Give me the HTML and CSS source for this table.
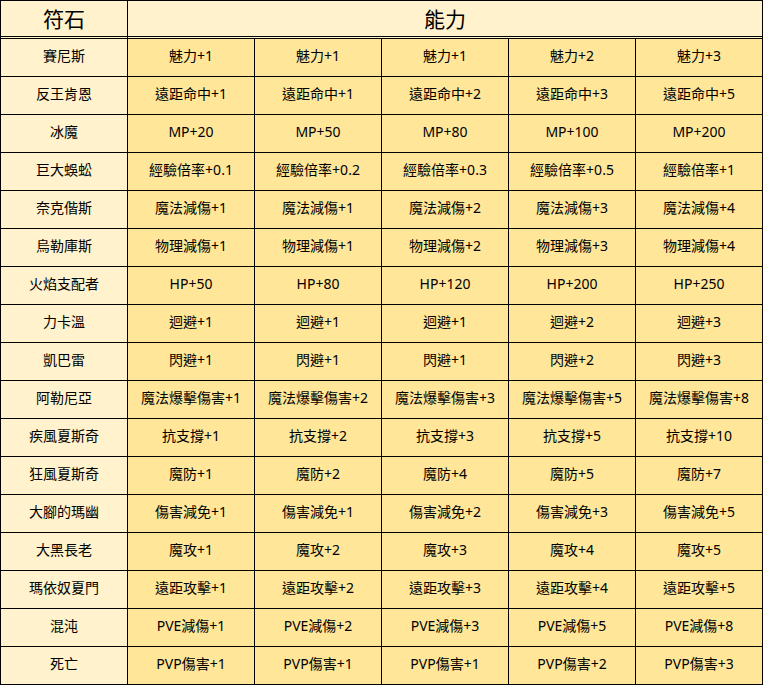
FILE: index.html
```html
<!DOCTYPE html>
<html lang="zh-Hant">
<head>
<meta charset="utf-8">
<title>符石能力</title>
<link rel="stylesheet" href="styles.css">
</head>
<body>
<div class="sheet">
  <div class="cell head">符石</div>
  <div class="cell head wide">能力</div>

  <div class="cell name">賽尼斯</div><div class="cell val">魅力+1</div><div class="cell val">魅力+1</div><div class="cell val">魅力+1</div><div class="cell val">魅力+2</div><div class="cell val">魅力+3</div>
  <div class="cell name">反王肯恩</div><div class="cell val">遠距命中+1</div><div class="cell val">遠距命中+1</div><div class="cell val">遠距命中+2</div><div class="cell val">遠距命中+3</div><div class="cell val">遠距命中+5</div>
  <div class="cell name">冰魔</div><div class="cell val">MP+20</div><div class="cell val">MP+50</div><div class="cell val">MP+80</div><div class="cell val">MP+100</div><div class="cell val">MP+200</div>
  <div class="cell name">巨大蜈蚣</div><div class="cell val">經驗倍率+0.1</div><div class="cell val">經驗倍率+0.2</div><div class="cell val">經驗倍率+0.3</div><div class="cell val">經驗倍率+0.5</div><div class="cell val">經驗倍率+1</div>
  <div class="cell name">奈克偕斯</div><div class="cell val">魔法減傷+1</div><div class="cell val">魔法減傷+1</div><div class="cell val">魔法減傷+2</div><div class="cell val">魔法減傷+3</div><div class="cell val">魔法減傷+4</div>
  <div class="cell name">烏勒庫斯</div><div class="cell val">物理減傷+1</div><div class="cell val">物理減傷+1</div><div class="cell val">物理減傷+2</div><div class="cell val">物理減傷+3</div><div class="cell val">物理減傷+4</div>
  <div class="cell name">火焰支配者</div><div class="cell val">HP+50</div><div class="cell val">HP+80</div><div class="cell val">HP+120</div><div class="cell val">HP+200</div><div class="cell val">HP+250</div>
  <div class="cell name">力卡溫</div><div class="cell val">迴避+1</div><div class="cell val">迴避+1</div><div class="cell val">迴避+1</div><div class="cell val">迴避+2</div><div class="cell val">迴避+3</div>
  <div class="cell name">凱巴雷</div><div class="cell val">閃避+1</div><div class="cell val">閃避+1</div><div class="cell val">閃避+1</div><div class="cell val">閃避+2</div><div class="cell val">閃避+3</div>
  <div class="cell name">阿勒尼亞</div><div class="cell val">魔法爆擊傷害+1</div><div class="cell val">魔法爆擊傷害+2</div><div class="cell val">魔法爆擊傷害+3</div><div class="cell val">魔法爆擊傷害+5</div><div class="cell val">魔法爆擊傷害+8</div>
  <div class="cell name">疾風夏斯奇</div><div class="cell val">抗支撐+1</div><div class="cell val">抗支撐+2</div><div class="cell val">抗支撐+3</div><div class="cell val">抗支撐+5</div><div class="cell val">抗支撐+10</div>
  <div class="cell name">狂風夏斯奇</div><div class="cell val">魔防+1</div><div class="cell val">魔防+2</div><div class="cell val">魔防+4</div><div class="cell val">魔防+5</div><div class="cell val">魔防+7</div>
  <div class="cell name">大腳的瑪幽</div><div class="cell val">傷害減免+1</div><div class="cell val">傷害減免+1</div><div class="cell val">傷害減免+2</div><div class="cell val">傷害減免+3</div><div class="cell val">傷害減免+5</div>
  <div class="cell name">大黑長老</div><div class="cell val">魔攻+1</div><div class="cell val">魔攻+2</div><div class="cell val">魔攻+3</div><div class="cell val">魔攻+4</div><div class="cell val">魔攻+5</div>
  <div class="cell name">瑪依奴夏門</div><div class="cell val">遠距攻擊+1</div><div class="cell val">遠距攻擊+2</div><div class="cell val">遠距攻擊+3</div><div class="cell val">遠距攻擊+4</div><div class="cell val">遠距攻擊+5</div>
  <div class="cell name">混沌</div><div class="cell val">PVE減傷+1</div><div class="cell val">PVE減傷+2</div><div class="cell val">PVE減傷+3</div><div class="cell val">PVE減傷+5</div><div class="cell val">PVE減傷+8</div>
  <div class="cell name">死亡</div><div class="cell val">PVP傷害+1</div><div class="cell val">PVP傷害+1</div><div class="cell val">PVP傷害+1</div><div class="cell val">PVP傷害+2</div><div class="cell val">PVP傷害+3</div>
</div>
</body>
</html>
```

FILE: styles.css
```css
html, body {
  margin: 0;
  padding: 0;
  background: #ffffff;
}

.sheet {
  display: grid;
  grid-template-columns: repeat(6, 127px);
  grid-template-rows: 38px repeat(17, 38px);
  width: 763px;
  box-sizing: border-box;
  border-left: 1px solid #000;
  border-top: 1px solid #000;
  font-family: "Noto Sans", "Noto Sans CJK TC", sans-serif;
  color: #000;
}

.cell {
  box-sizing: border-box;
  border-right: 1px solid #000;
  border-bottom: 1px solid #000;
  display: flex;
  align-items: center;
  justify-content: center;
  font-size: 14px;
  line-height: 1;
  white-space: nowrap;
  padding-bottom: 3px;
}

.head {
  background: #fff2cc;
  border-bottom: 3px double #000;
  font-family: "Noto Sans CJK TC", sans-serif;
  font-size: 21px;
  padding-bottom: 1px;
}

.wide {
  grid-column: 2 / span 5;
}

.name {
  background: #fff2cc;
}

.val {
  background: #ffe699;
}
```
